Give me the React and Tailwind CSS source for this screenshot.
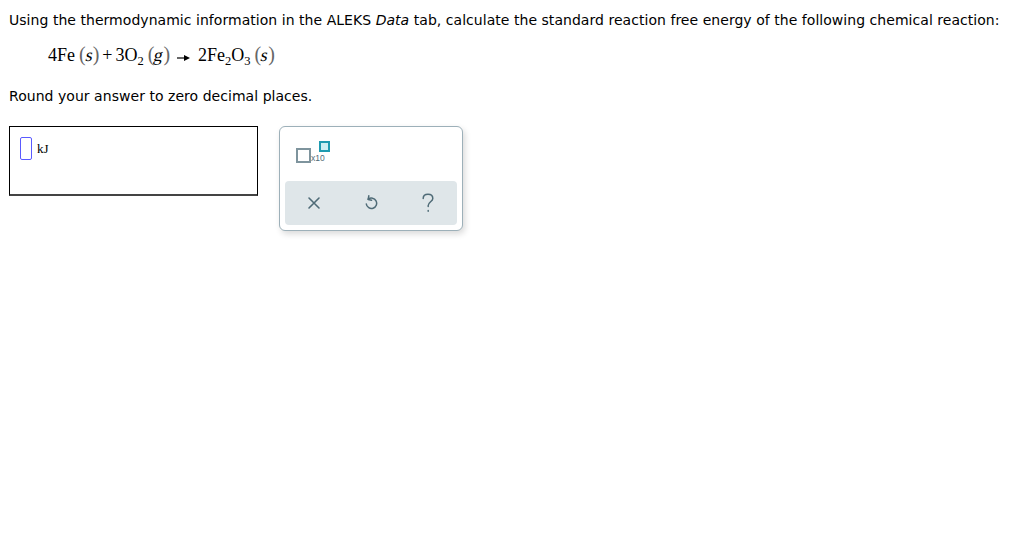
import React from "react";

function XIcon() {
  return (
    <svg width="14" height="14" viewBox="0 0 14 14" fill="none" stroke="#4f6b77" strokeWidth="1.6" strokeLinecap="round">
      <path d="M2 2 L12 12 M12 2 L2 12" />
    </svg>
  );
}

function UndoIcon() {
  return (
    <svg width="14" height="18" viewBox="0 0 14 18" fill="none" stroke="#4f6b77" strokeWidth="1.5" strokeLinecap="round" strokeLinejoin="round">
      <path d="M4.2 5.2 A5.2 5.2 0 1 1 2.3 10" />
      <path d="M4.8 1.8 L4.2 5.4 L7.6 6.2" />
    </svg>
  );
}

function QIcon() {
  return (
    <svg width="14" height="20" viewBox="0 0 14 20" fill="none" stroke="#4f6b77" strokeWidth="1.5" strokeLinecap="round" strokeLinejoin="round">
      <path d="M2.2 5.5 C2.2 2.8 4.2 1.3 7 1.3 C9.8 1.3 11.8 3 11.8 5.4 C11.8 8.6 7.2 9 7.2 12.6 L7.2 13.4" />
      <path d="M7.2 17.6 L7.2 18.2" />
    </svg>
  );
}

function P({ children }) {
  return <span className="text-[#666] text-[20px] leading-[20px]">{children}</span>;
}

function Sub({ children }) {
  return <span className="text-[12.5px] leading-[12px] relative top-[4px]">{children}</span>;
}

function Phase({ s }) {
  return (
    <span className="ml-[4px]">
      <P>(</P>
      <span className="inline-block -skew-x-12">{s}</span>
      <P>)</P>
    </span>
  );
}

export default function App() {
  const sans = { fontFamily: '"DejaVu Sans", Verdana, sans-serif' };
  const serif = { fontFamily: '"Liberation Serif", "Times New Roman", serif' };
  return (
    <div className="w-[1024px] h-[552px] bg-white text-black">
      <div className="pl-[9px] pt-[12px] text-[14px] leading-[17px] tracking-[0.04px]" style={sans}>
        Using the thermodynamic information in the ALEKS <i>Data</i> tab, calculate the standard reaction free energy of the following chemical reaction:
      </div>
      <div className="pl-[48px] pt-[15px] h-[40px] text-[18px] leading-[22px] flex items-baseline whitespace-pre" style={serif}>
        <span>4Fe</span>
        <Phase s="s" />
        <span className="mx-[3px]">+</span>
        <span>3O</span><Sub>2</Sub>
        <Phase s="g" />
        <span className="mx-[7px] self-center relative top-[1px]">
          <svg width="14" height="8" viewBox="0 0 14 8">
            <path d="M0 4 L9 4" stroke="#000" strokeWidth="1.2" />
            <path d="M7 1 L13 4 L7 7 Z" fill="#000" />
          </svg>
        </span>
        <span>2Fe</span><Sub>2</Sub><span>O</span><Sub>3</Sub>
        <Phase s="s" />
      </div>
      <div className="pl-[9px] pt-[19px] text-[14px] leading-[17px] tracking-[0.04px]" style={sans}>
        Round your answer to zero decimal places.
      </div>
      <div className="flex items-start pl-[9px] pt-[21px] gap-[21px]">
        <div className="w-[249px] h-[70px] border border-black border-b-2 border-b-[#444] flex items-start pl-[10px] pt-[10px]">
          <div className="w-[12px] h-[23px] border-[1.5px] border-[#5a5aff] rounded-[2px]" />
          <span className="ml-[5px] mt-[4px] text-[13px] leading-[15px]" style={serif}>kJ</span>
        </div>
        <div className="w-[184px] h-[105px] border border-[#9db0b9] rounded-[6px] shadow-[2px_3px_6px_rgba(0,0,0,0.15)] bg-white flex flex-col">
          <div className="h-[54px] pl-[16px] pt-[14px]">
            <div className="relative w-[36px] h-[24px]">
              <div className="absolute left-0 top-[7px] w-[15px] h-[15px] border-2 border-[#7e949d]" />
              <span className="absolute left-[15px] top-[13px] text-[8.5px] leading-[9px] text-[#4f6b77]" style={{ fontFamily: '"Liberation Sans", Arial, sans-serif' }}>x10</span>
              <div className="absolute left-[23px] top-0 w-[11px] h-[11px] border-2 border-[#1f9bb0] bg-[#cdeff3]" />
            </div>
          </div>
          <div className="mx-[5px] h-[44px] rounded-[4px] bg-[#dfe6e9] flex items-center justify-between px-[22px]">
            <XIcon />
            <UndoIcon />
            <QIcon />
          </div>
        </div>
      </div>
    </div>
  );
}
